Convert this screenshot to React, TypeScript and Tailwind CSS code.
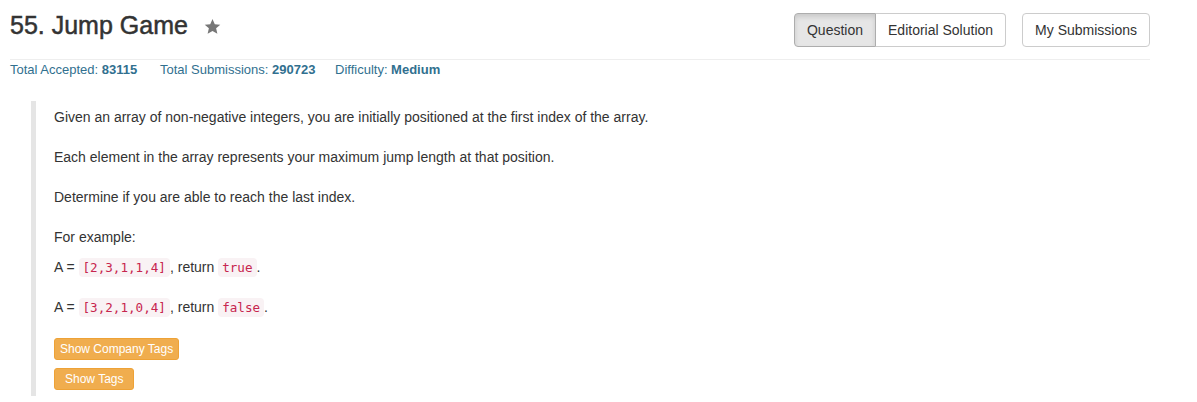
import React from "react";

const font = { fontFamily: '"Liberation Sans", Arial, sans-serif' };

function Code({ children }: { children: React.ReactNode }) {
  return (
    <code className="rounded-[4px] bg-[#f9f2f4] px-[4px] py-[2px] font-['DejaVu_Sans_Mono',monospace] text-[12.6px] text-[#c7254e]">
      {children}
    </code>
  );
}

function Star() {
  return (
    <svg width="17" height="17" viewBox="0 0 24 24" className="ml-[16px] mt-[5px] fill-[#777]">
      <path d="M12 1.5l3.2 7.2 7.8.7-5.9 5.2 1.8 7.7L12 18.3l-6.9 4 1.8-7.7L1 9.4l7.8-.7z" />
    </svg>
  );
}

export default function App() {
  return (
    <div className="min-h-[402px] bg-white text-[#333]" style={font}>
      <div className="w-[1140px] ml-[10px]">
        {/* header */}
        <div className="flex items-start justify-between pt-[13px] pb-[12px] border-b border-[#eee]">
          <div className="flex items-start">
            <h3 className="text-[25px] leading-[25px] font-medium [-webkit-text-stroke:0.5px_#333]">55. Jump Game</h3>
            <Star />
          </div>
          <div className="flex text-[14px] leading-[20px]">
            <div className="flex">
              <button className="h-[34px] px-[12px] border border-[#adadad] bg-[#e6e6e6] rounded-l-[4px] shadow-[inset_0_3px_5px_rgba(0,0,0,0.125)]">
                Question
              </button>
              <button className="h-[34px] px-[12px] border border-l-0 border-[#ccc] bg-white rounded-r-[4px]">
                Editorial Solution
              </button>
            </div>
            <button className="ml-[16px] h-[34px] px-[12px] border border-[#ccc] bg-white rounded-[4px]">
              My Submissions
            </button>
          </div>
        </div>

        {/* stats */}
        <div className="flex text-[13px] leading-[17px] text-[#31708f] mt-[1px]">
          <span className="w-[150px]">
            Total Accepted: <b>83115</b>
          </span>
          <span className="w-[175px]">
            Total Submissions: <b>290723</b>
          </span>
          <span>
            Difficulty: <b>Medium</b>
          </span>
        </div>

        {/* description */}
        <div className="mt-[23px] ml-[21px] border-l-[5px] border-[#e5e5e5] pl-[18px] pt-[6px] pb-[6px] text-[14px] leading-[20px]">
          <p className="mb-[20px]">
            Given an array of non-negative integers, you are initially positioned at the first index of the array.
          </p>
          <p className="mb-[20px]">Each element in the array represents your maximum jump length at that position.</p>
          <p className="mb-[20px]">Determine if you are able to reach the last index.</p>
          <p className="mb-[10px]">For example:</p>
          <p className="mb-[19px]">
            A = <Code>[2,3,1,1,4]</Code>, return <Code>true</Code>.
          </p>
          <p className="mb-[20px]">
            A = <Code>[3,2,1,0,4]</Code>, return <Code>false</Code>.
          </p>
          <div className="flex flex-col items-start gap-[8px] text-white text-[12px]">
            <button className="h-[22px] px-[5px] rounded-[3px] bg-[#f0ad4e] border border-[#eea236] leading-[20px]">
              Show Company Tags
            </button>
            <button className="h-[22px] px-[10px] rounded-[3px] bg-[#f0ad4e] border border-[#eea236] leading-[20px]">
              Show Tags
            </button>
          </div>
        </div>
      </div>
    </div>
  );
}
